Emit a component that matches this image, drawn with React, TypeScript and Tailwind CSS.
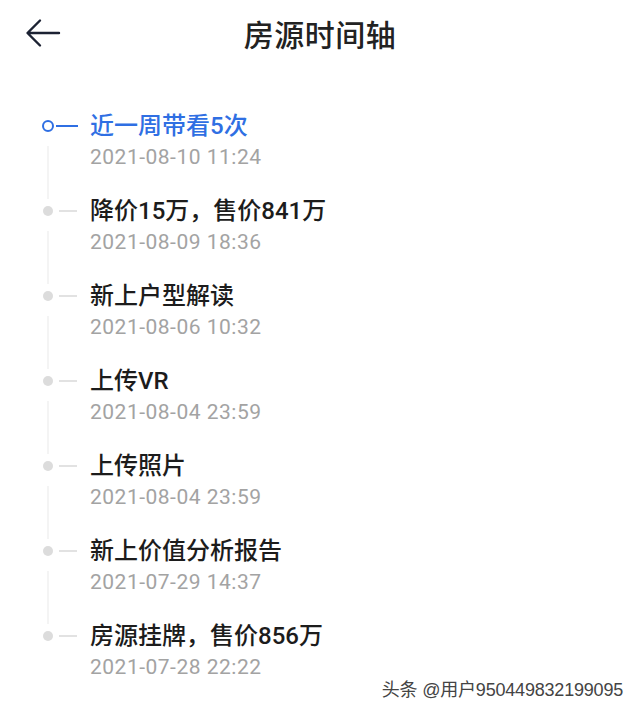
import React from "react";

const items = [
  { title: "近一周带看5次", time: "2021-08-10 11:24", active: true },
  { title: "降价15万，售价841万", time: "2021-08-09 18:36" },
  { title: "新上户型解读", time: "2021-08-06 10:32" },
  { title: "上传VR", time: "2021-08-04 23:59" },
  { title: "上传照片", time: "2021-08-04 23:59" },
  { title: "新上价值分析报告", time: "2021-07-29 14:37" },
  { title: "房源挂牌，售价856万", time: "2021-07-28 22:22" },
];

const font = { fontFamily: 'Roboto, "Noto Sans CJK SC", sans-serif' };

export default function App() {
  return (
    <div
      className="relative w-[640px] h-[713px] bg-white overflow-hidden select-none"
      style={font}
    >
      {/* Header */}
      <div className="relative flex items-center justify-center h-[72px]">
        <button className="absolute left-[24px] top-[17px] w-[38px] h-[32px] flex items-center justify-center">
          <svg width="38" height="32" viewBox="0 0 38 32" fill="none">
            <path
              d="M35 16H4M16 3.5L3.5 16L16 28.5"
              stroke="#1c2233"
              strokeWidth="2.4"
              strokeLinecap="round"
              strokeLinejoin="round"
            />
          </svg>
        </button>
        <h1 className="text-[30px] leading-none font-medium text-[#222222] tracking-[0.5px]">
          房源时间轴
        </h1>
      </div>

      {/* Timeline */}
      <div className="flex flex-col pt-[37px]">
        {items.map((item, i) => {
          const last = i === items.length - 1;
          return (
            <div key={i} className="flex">
              <div className="w-[90px] flex flex-col shrink-0">
                <div className="h-[34px] flex items-center">
                  {item.active ? (
                    <>
                      <div className="ml-[42px] w-[12px] h-[12px] rounded-full border-[2.5px] border-[#2f6fe3]" />
                      <div className="ml-[2px] w-[22px] h-[2px] bg-[#2f6fe3]" />
                    </>
                  ) : (
                    <>
                      <div className="ml-[43px] w-[10px] h-[10px] rounded-full bg-[#dcdcdc]" />
                      <div className="ml-[6px] w-[18px] h-[1.5px] bg-[#e2e2e2]" />
                    </>
                  )}
                </div>
                {!last && (
                  <div className="flex-1 ml-[47px] w-[2px] bg-[#f4f4f4] mt-[3px] mb-[-5px]" />
                )}
              </div>
              <div className="flex flex-col pb-[21px]">
                <div
                  className={
                    "h-[34px] flex items-center text-[24px] font-medium " +
                    (item.active ? "text-[#2f6fe3]" : "text-[#1c1c1c]")
                  }
                >
                  {item.title}
                </div>
                <div className="h-[30px] flex items-center text-[21px] tracking-[0.5px] text-[#a3a3a3]">
                  {item.time}
                </div>
              </div>
            </div>
          );
        })}
      </div>

      {/* Watermark */}
      <div
        className="absolute right-[17px] bottom-[14px] text-[18px] leading-none text-[#444444] tracking-[-0.2px]"
        style={{
          fontFamily: '"Liberation Sans", "Noto Sans CJK SC", sans-serif',
          textShadow: "0 0 2px #fff, 0 0 2px #fff",
        }}
      >
        头条 @用户950449832199095
      </div>
    </div>
  );
}
